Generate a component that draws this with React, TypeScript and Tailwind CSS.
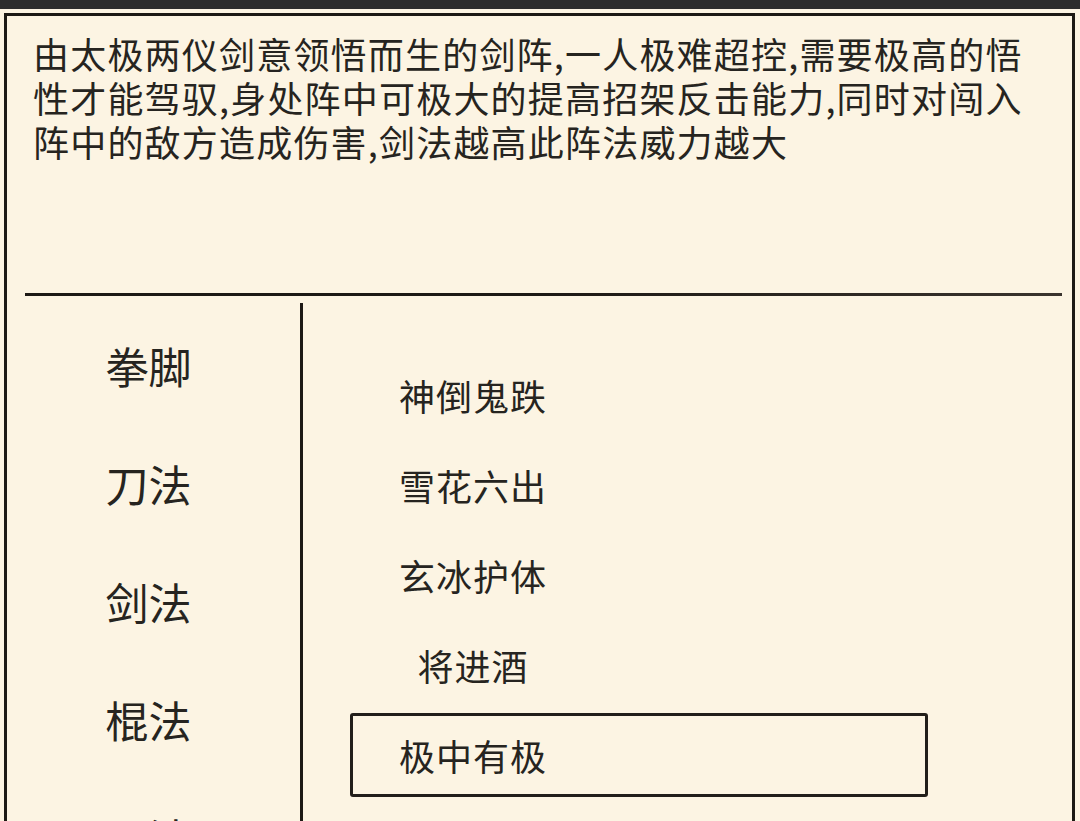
const description =
  "由太极两仪剑意领悟而生的剑阵,一人极难超控,需要极高的悟性才能驾驭,身处阵中可极大的提高招架反击能力,同时对闯入阵中的敌方造成伤害,剑法越高此阵法威力越大";

const categories = ["拳脚", "刀法", "剑法", "棍法", "腿法"];

const skills = ["神倒鬼跌", "雪花六出", "玄冰护体", "将进酒", "极中有极"];

export default function App() {
  const selected = 4;

  return (
    <div
      className="w-[1080px] h-[821px] overflow-hidden bg-[#fcf4e3] text-[#262420]"
      style={{ fontFamily: '"Noto Sans CJK SC", "Noto Sans", sans-serif' }}
    >
      <div className="h-[9px] bg-[#2d2d2d]" />
      <div className="h-[4px]" />

      {/* outer frame */}
      <div className="ml-[4px] mr-[5px] h-[808px] border-t-[3px] border-l-[3px] border-r-[3px] border-[#1d1915]">
        <div className="h-[277px] pl-[26px] pr-[20px] pt-[15px]">
          <p className="text-[36px] leading-[44px] tracking-[1.2px]">{description}</p>
        </div>

        <div className="ml-[18px] mr-[10px] h-[3px] bg-gradient-to-r from-[#1d1915] via-[#1d1915] to-[#3a342e]" />

        <div className="flex h-full">
          {/* categories */}
          <div className="w-[293px] pt-[10px] pr-[10px] flex flex-col">
            {categories.map((c) => (
              <div
                key={c}
                className="h-[118px] shrink-0 flex items-center justify-center text-[43px] leading-none"
              >
                {c}
              </div>
            ))}
          </div>

          <div className="w-[3px] mt-[7px] bg-[#1d1915]" />

          {/* skill list */}
          <div className="flex-1 pt-[54px] pl-[47px] flex flex-col">
            {skills.map((s, i) => (
              <div key={s} className="h-[90px] shrink-0 flex items-center">
                <div
                  className={
                    "w-[578px] h-[84px] flex items-center rounded-[3px] border-[3px] " +
                    (i === selected ? "border-[#221e1a]" : "border-transparent")
                  }
                >
                  <span className="w-[240px] text-center text-[36px] leading-none tracking-[1px]">{s}</span>
                </div>
              </div>
            ))}
          </div>
        </div>
      </div>
    </div>
  );
}
